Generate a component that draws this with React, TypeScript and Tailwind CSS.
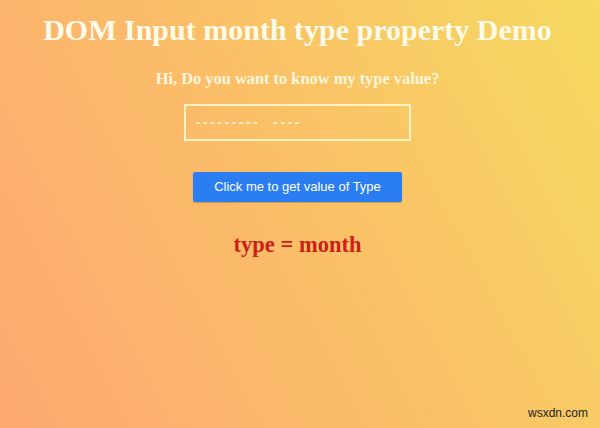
export default function App() {
  return (
    <div className="relative w-[600px] h-[428px] overflow-hidden bg-[linear-gradient(62deg,#fda771_0%,#fbbf68_50%,#f5d960_100%)] font-['Liberation_Serif',serif]">
      <div className="flex flex-col items-center pr-[5px]">
        <h1 className="mt-[12px] text-[30px] leading-[36px] font-bold text-[#fffbe8]">
          DOM Input month type property Demo
        </h1>
        <p className="mt-[22px] text-[16.4px] leading-[18px] font-bold text-[#fff6dc]">
          Hi, Do you want to know my type value?
        </p>
        <div className="mt-[16px] ml-[-1px] w-[227px] h-[37px] border-2 border-[#fff3c4] flex items-center pl-[10px]">
          <span className="font-['Liberation_Sans',sans-serif] font-bold text-[15px] text-[#fff0c8] tracking-[2.2px]">
            ---------&nbsp;&nbsp;----
          </span>
        </div>
        <button className="mt-[31px] w-[209px] h-[30px] bg-[#2b7df2] rounded-[2px] text-white text-[13px] font-['Liberation_Sans',sans-serif] shadow-[0_1px_1px_rgba(0,0,0,0.2)]">
          Click me to get value of Type
        </button>
        <p className="mt-[30px] text-[22.5px] leading-[26px] font-bold text-[#cc1f1a]">
          type = month
        </p>
      </div>
      <div className="absolute right-[12px] bottom-[6px] font-['Liberation_Sans',sans-serif] text-[12px] text-[#222]">
        wsxdn.com
      </div>
    </div>
  );
}
